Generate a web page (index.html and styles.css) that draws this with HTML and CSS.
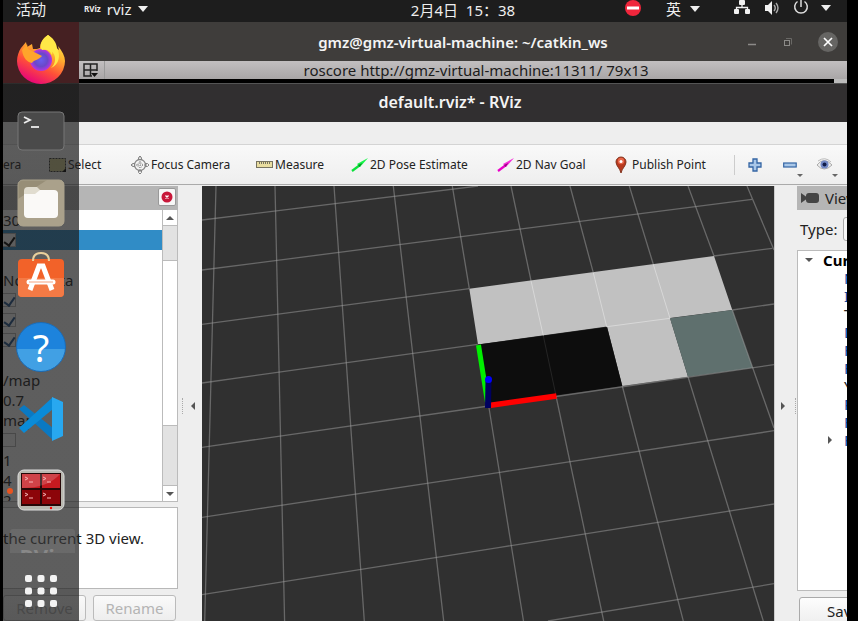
FILE: index.html
```html
<!DOCTYPE html>
<html lang="zh-CN">
<head>
<meta charset="utf-8">
<title>default.rviz* - RViz</title>
<link rel="stylesheet" href="styles.css">
</head>
<body>
<div class="desktop">
  <header class="topbar">
    <button class="bar-btn activities">活动</button>
    <button class="bar-btn app-menu"><span class="app-logo">RViz</span>rviz <i class="caret"></i></button>
    <time class="clock">2月4日&nbsp; 15：38</time>
    <div class="status">
      <svg class="dnd" width="16" height="16" viewBox="0 0 16 16"><circle cx="8" cy="8" r="8" fill="#f0263c"/><rect x="2" y="6.500" width="12" height="3" fill="#fff"/></svg>
      <button class="bar-btn lang">英 <i class="caret"></i></button>
      <svg class="net" width="16" height="16" viewBox="0 0 16 16" fill="#f2f2f2"><rect x="5" y="0" width="6" height="5" rx="1"/><rect x="0" y="9" width="5" height="5" rx="1"/><rect x="11" y="9" width="5" height="5" rx="1"/><path d="M2.500 10V7.500h11V10M8 5v3" fill="none" stroke="#f2f2f2" stroke-width="1.300"/></svg>
      <svg class="vol" width="17" height="16" viewBox="0 0 17 16" fill="#f2f2f2"><path d="M1 5h3l4-4v14l-4-4H1z"/><path d="M10 5q2.500 3 0 6M12 3q4 5 0 10" fill="none" stroke="#aaa" stroke-width="1.400"/></svg>
      <svg class="power" width="16" height="16" viewBox="0 0 16 16" fill="none" stroke="#ddd" stroke-width="1.500"><path d="M4.500 1.500a6.300 6.300 0 1 0 7 0M8 0v7"/></svg>
      <i class="caret"></i>
    </div>
  </header>

  <section class="terminal">
    <div class="term-title">
      <h2>gmz@gmz-virtual-machine: ~/catkin_ws</h2>
      <div class="win-controls">
        <button aria-label="Minimize"><svg width="10" height="10"><path d="M1 7.500h8" stroke="#8c8b88" stroke-width="1.500"/></svg></button>
        <button aria-label="Restore"><svg width="10" height="10" fill="none" stroke="#8c8b88"><rect x="1.500" y="3.500" width="5" height="5"/><path d="M3 1.500h5.500v6" stroke="#6a6966"/></svg></button>
        <button class="close" aria-label="Close"><svg width="20" height="20"><path d="m6 6 8 8m0-8-8 8" stroke="#fff" stroke-width="1.700"/></svg></button>
      </div>
    </div>
    <div class="term-tab">
      <button class="split" aria-label="Split"><svg width="16" height="15" fill="none" stroke="#222" stroke-width="1.500"><path d="M9 13H1V1h13v7M7.500 1v12M1 7h13"/><path d="M8 10h7l-3.500 4z" fill="#111" stroke="none"/></svg></button>
      <span>roscore http://gmz-virtual-machine:11311/ 79x13</span>
    </div>
    <div class="term-body"></div>
  </section>

  <section class="rviz">
    <h1 class="rviz-title">default.rviz* - RViz</h1>
    <div class="menubar"></div>
    <div class="toolbar">
      <button>era</button>
      <button><svg width="17" height="14"><rect x=".5" y=".5" width="16" height="13" fill="#d5cf91" stroke="#333" stroke-dasharray="2 1"/><path d="M17 10v4h-4z"/></svg>Select</button>
      <button><svg width="18" height="18" fill="none" stroke="#858585"><circle cx="9" cy="9" r="5.500" stroke-width="1.300"/><circle cx="9" cy="9" r="2.500" stroke-dasharray="1 1"/><path d="M9 1v16M1 9h16" stroke-dasharray="1 1"/><path d="M7.500 4V1.500L9 0l1.500 1.500V4M7.500 14v2.500L9 18l1.500-1.500V14M4 7.500H1.500L0 9l1.500 1.500H4M14 7.500h2.500L18 9l-1.500 1.500H14"/></svg>Focus Camera</button>
      <button><svg width="17" height="7"><rect x=".5" y=".5" width="16" height="6" fill="#e9dda0" stroke="#77735f"/><path d="M3.500 1v2m2-2v2m2-2v2m2-2v2m2-2v2m2-2v2" stroke="#77735f"/></svg>Measure</button>
      <button><svg width="17" height="14"><path d="M1 13 9 7" stroke="#0be13a" stroke-width="2.200"/><path d="M17 0 6 6l3 3z" fill="#16f548"/><path d="m7 7 1.500 2 3-4z" fill="#078d24"/></svg>2D Pose Estimate</button>
      <button><svg width="17" height="14"><path d="M1 13 9 7" stroke="#e900c8" stroke-width="2.200"/><path d="M17 0 6 6l3 3z" fill="#f52ad8"/><path d="m7 7 1.500 2 3-4z" fill="#970080"/></svg>2D Nav Goal</button>
      <button class="pin"><svg width="12" height="17"><path d="M6 17C5 12 1 10 1 6a5 5 0 0 1 10 0c0 4-4 6-5 11z" fill="#b83a20" stroke="#84351f"/><circle cx="6" cy="5" r="3.200" fill="#e8674a"/><circle cx="6" cy="5.500" r="1.500" fill="#fff"/></svg>Publish Point</button>
      <button class="tool plus" aria-label="Add"><svg width="14" height="14"><path d="M5 1h4v4h4v4H9v4H5V9H1V5h4z" fill="#a9c7e8" stroke="#3465a4" stroke-width="1.300"/></svg></button>
      <button class="tool" aria-label="Remove tool"><svg width="20" height="24"><rect x=".7" y="10" width="12.500" height="4" fill="#a9c7e8" stroke="#3465a4" stroke-width="1.200"/><path d="M14 21h6l-3 3z" fill="#666"/></svg></button>
      <button class="tool" aria-label="Visibility"><svg width="22" height="24"><path d="M1 12q7-9 15 0-8 8-15 0z" fill="#eee" stroke="#aaa"/><path d="M2 8q7-5 13 1" fill="none" stroke="#bbb"/><circle cx="8.500" cy="11.500" r="4" fill="#7289c6"/><circle cx="8.500" cy="11.500" r="2" fill="#101c48"/><path d="M16 21h6l-3 3z" fill="#666"/></svg></button>
    </div>

    <div class="main">
      <aside class="displays">
        <div class="panel-head"><button class="panel-close" aria-label="Close panel"><svg width="12" height="12"><circle cx="6" cy="6" r="5.500" fill="#c8183a"/><path d="m4.500 4.500 3 3m0-3-3 3" stroke="#fff" stroke-width="1.300"/></svg></button></div>
        <div class="tree">
          <div class="rows">
            <div class="row">30</div>
            <div class="row selected"><input type="checkbox" checked aria-label="Map"></div>
            <div class="row"></div>
            <div class="row">No tf data</div>
            <div class="row"><input type="checkbox" checked aria-label="Transform"></div>
            <div class="row"><input type="checkbox" checked aria-label="Message"></div>
            <div class="row"><input type="checkbox" checked aria-label="Status"></div>
            <div class="row"></div>
            <div class="row">/map</div>
            <div class="row">0.7</div>
            <div class="row">map</div>
            <div class="row"><input type="checkbox" aria-label="Draw behind"></div>
            <div class="row">1</div>
            <div class="row">4</div>
            <div class="row">2</div>
          </div>
          <div class="scrollbar"><span class="step"><i class="up"></i></span><span class="track"></span><span class="thumb"></span><span class="track low"></span><span class="step"><i class="down"></i></span></div>
        </div>
        <div class="help-text">the current 3D view.</div>
        <div class="panel-buttons"><button disabled>Remove</button><button disabled>Rename</button></div>
      </aside>
      <div class="splitter left"><i class="dots"></i><i class="arrow"></i></div>
      <svg class="scene" viewBox="202 186 572 435" preserveAspectRatio="xMinYMin slice">
        <g fill="#c1c1c1"><path d="M469.300 288.700 714 256l18.300 54-62.300 8 18 58.700-65.700 9.300-15.300-59.500-129 18z"/></g>
        <path d="m478 344.500 129-17.500 15.300 59L488.700 405z" fill="#0d0d0d"/>
        <path d="m670 318.300 62.300-8.300 20.400 57.700-64.700 9z" fill="#5f706e"/>
        <g stroke="#a0a0a0" stroke-opacity=".5" stroke-width="1.300" fill="none">
          <path d="M216 186 204.700 621M275 186l9.600 435M334 186l30.300 435M393.300 186l50.400 435M452.300 186 469.300 288.700M488.700 406l34.800 215M511 186l20 94.700M556 396l47.700 225M570 186l23.300 86.700M622.300 386l61 235M629.300 186l24 78.300M688 376.700 763.300 621M688 186l26 70M732.300 310 774 428M747 186l27 64"/>
          <path d="M202 220 478 186M202 270l550-70.700M202 324.300l267.300-35.600M714 256l58.300-7.700M202 383l275.700-38.700M732.300 310l41.700-6M202 447.300 488.700 406M556 396.500l218-31.800M202 517.300l298-45 274-41.600M202 594.700l298-47.400L774 504M548 621l226-37.300"/>
        </g>
        <path d="m531 280.700 12.300 55M593.300 272.700l13.400 54 63.300-8.400-16.700-54" fill="none" stroke="#d8d8d8"/>
        <path d="m543.300 335.700 12.700 60" stroke="#252525" fill="none"/>
        <path d="m478.500 345 9 57" stroke="#0e0" stroke-width="5"/>
        <path d="m489 405.500 67.500-9.500" stroke="#f00" stroke-width="5.500"/>
        <path d="m488.500 380-.5 28" stroke="#000060" stroke-width="6"/>
        <circle cx="488.500" cy="379.500" r="3.500" fill="#00f"/>
      </svg>
      <div class="splitter right"><i class="arrow"></i><i class="dots"></i></div>
      <aside class="views">
        <div class="panel-head"><svg width="18" height="10" fill="#444"><path d="M0 0l7 5-7 5z"/><rect x="5" width="13" height="10" rx="3"/></svg>Views</div>
        <div class="type-row"><label for="type">Type:</label><select id="type"><option>Orbit</option></select></div>
        <div class="view-tree">
          <div class="view-head"><i class="down"></i><b>Current View</b></div>
          <div class="view-row">Near Clip</div>
          <div class="view-row">Invert Z</div>
          <div class="view-row plain">Target</div>
          <div class="view-row">Distance</div>
          <div class="view-row">Focal Size</div>
          <div class="view-row">Focal Fixed</div>
          <div class="view-row plain">Yaw</div>
          <div class="view-row">Pitch</div>
          <div class="view-row">Field</div>
          <div class="view-row"><i class="arrow"></i>Focal Point</div>
        </div>
        <button class="save">Save</button>
      </aside>
    </div>
  </section>

  <nav class="dock">
    <button aria-label="Firefox"><svg width="48" height="50" viewBox="0 0 48 50">
      <defs><linearGradient id="fx" x1=".8" y1="0" x2=".3" y2="1"><stop offset="0" stop-color="#fff44f"/><stop offset=".35" stop-color="#ffb02e"/><stop offset=".65" stop-color="#ff5038"/><stop offset="1" stop-color="#e5007d"/></linearGradient><radialGradient id="fp"><stop offset="0" stop-color="#6a5cf0"/><stop offset=".6" stop-color="#6a48c8"/><stop offset="1" stop-color="#b833e1"/></radialGradient></defs>
      <path d="M31 1c5 4 7 8 8 13l3 2-1-4c4 5 7 10 7 15a24 23 0 0 1-48 0c0-5 2-10 4-13l5-6 1 5 5-3 1 5c3 0 5 0 7-1 0-5 3-10 8-13z" fill="url(#fx)"/><circle cx="24" cy="26" r="11" fill="url(#fp)"/><path d="M5 16l5-6 1 5 6 3 8 4c-3 4-9 4-10 7-5-1-9-5-10-13z" fill="#ffa52b"/><path d="M31 1c-7 5-9 11-6 15 5-1 8 0 10 5 1-3-1-4-1-4 6 4 5 13 0 17 8-3 10-13 6-20-1-6-4-10-9-13z" fill="#ffe847"/>
    </svg></button>
    <button aria-label="Terminal"><svg width="48" height="40"><rect x="1" y="1" width="46" height="38" rx="4" fill="#4a4a4a" stroke="#777"/><path d="m7 6 6 3-6 3" fill="none" stroke="#eee" stroke-width="1.800"/><path d="M14 16h8" stroke="#eee" stroke-width="1.800"/></svg></button>
    <button aria-label="Files"><svg width="48" height="48"><rect x="1" y="1" width="46" height="46" rx="5" fill="#978e77" stroke="#aaa28c"/><path d="M1 40V20L30 1h12q5 0 5 5v36q0 5-5 5H6q-5 0-5-5z" fill="#aaa18b"/><path d="M7 12q0-4 4-4h9l4 4h13q4 0 4 4v20H7z" fill="#e0dccf"/><path d="M7 15h11l5-4h14q4 0 4 4v20q0 4-4 4H11q-4 0-4-4z" fill="#faf9f7"/></svg></button>
    <button aria-label="Ubuntu Software"><svg width="48" height="48"><rect x="1" y="8" width="46" height="38" rx="4" fill="#f26229"/><path d="M1 27h46v15q0 4-4 4H5q-4 0-4-4z" fill="#f47a45"/><path d="m13 39 9-24h4l9 24" fill="none" stroke="#fff" stroke-width="5"/><path d="M12 31h24" stroke="#fff" stroke-width="5" stroke-linecap="round"/><path d="M12 31h24" stroke="#f5a27e"/><path d="M16 10q0-8 8-8t8 8" fill="none" stroke="#e9cf9b" stroke-width="2"/></svg></button>
    <button class="help" aria-label="Help">?</button>
    <button aria-label="VS Code"><svg width="46" height="46"><path d="M1 13 6 9l29 23v12z" fill="#0a79c3"/><path d="M1 32 35 1v12L6 37z" fill="#0a8bd8"/><path d="m34 1 11 5v34l-11 5z" fill="#28a8f0"/></svg></button>
    <button class="running" aria-label="Terminator"><svg width="48" height="44"><rect x="1" y="1" width="46" height="40" rx="6" fill="#b8b8b0" stroke="#ddd"/><rect x="4" y="4" width="40" height="33" fill="#260707"/><path d="M5 5h18v14H5zm20 0h18v14H25z" fill="#c51a20"/><path d="M5 21h18v14H5zm20 0h18v14H25z" fill="#8c0509"/><path d="M5 5h38q-12 14-38 14z" fill="#fff" fill-opacity=".18"/><g stroke="#f4b5b5" fill="none"><path d="m8 8 3 1.500L8 11m4 2h4m10-5 3 1.500-3 1.500m4 2h4M8 24l3 1.500L8 27m4 2h4m10-5 3 1.500-3 1.500m4 2h4"/></g><circle cx="34" cy="39" r="1.200" fill="red"/></svg></button>
    <button class="ghost" aria-label="RViz"><span>RViz</span></button>
    <button class="apps" aria-label="Show applications"><svg width="32" height="32" fill="#f3f3f3"><rect width="7" height="7" rx="2"/><rect x="12.500" width="7" height="7" rx="2"/><rect x="25" width="7" height="7" rx="2"/><rect y="12.500" width="7" height="7" rx="2"/><rect x="12.500" y="12.500" width="7" height="7" rx="2"/><rect x="25" y="12.500" width="7" height="7" rx="2"/><rect y="25" width="7" height="7" rx="2"/><rect x="12.500" y="25" width="7" height="7" rx="2"/><rect x="25" y="25" width="7" height="7" rx="2"/></svg></button>
  </nav>
</div>
</body>
</html>
```
FILE: styles.css
```css
* { box-sizing: border-box; }
body {
  margin: 0;
  background: #000;
  color: #222;
  font: 15px/20px "Noto Sans", "Noto Sans CJK SC", sans-serif;
}
button { padding: 0; border: 0; background: none; color: inherit; font: inherit; }
svg { display: block; flex: none; }
i { display: inline-block; flex: none; }
h1, h2 { margin: 0; font-size: 15px; line-height: 20px; font-weight: 600; color: #f4f4f4; }

.desktop {
  position: relative;
  display: flex;
  flex-direction: column;
  height: 100vh;
  margin: 0 11px 0 3px;
  overflow: hidden;
  background: #eee;
}

/* Top bar */
.topbar {
  display: grid;
  grid-template-columns: 76px 1fr auto 1fr;
  align-items: start;
  flex: none;
  height: 22px;
  background: #1d1d1d;
  color: #eee;
}
.bar-btn { display: flex; align-items: center; height: 18px; white-space: nowrap; }
.activities { padding-left: 13px; }
.app-menu { gap: 6px; padding-left: 5px; }
.app-logo { font-size: 8px; font-weight: 700; line-height: 12px; }
.caret { border: 5px solid transparent; border-top: 6px solid #eee; border-bottom: 0; }
.clock { line-height: 20px; }
.status { display: flex; align-items: center; justify-content: flex-end; height: 16px; padding-right: 16px; }
.lang { gap: 9px; margin: 2px 34px 0 25px; }
.vol { margin: 0 12px 0 14px; }
.power { margin-right: 12px; }

/* Terminal window */
.terminal { flex: none; }
.term-title {
  position: relative;
  display: flex;
  justify-content: center;
  align-items: center;
  height: 39px;
  padding-left: 76px;
  background: #3f3d3b;
}
.win-controls { position: absolute; right: 9px; display: flex; align-items: center; gap: 26px; }
.close { margin-left: -1px; border-radius: 50%; background: #666563; }
.term-tab {
  display: flex;
  align-items: center;
  height: 18px;
  padding-left: 76px;
  background: linear-gradient(#c2bfc0, #a9a6a7);
  color: #1c1c1c;
}
.split { display: flex; align-items: center; width: 26px; height: 18px; padding-left: 4px; border-right: 1px solid #999; }
.term-tab span { flex: 1; text-align: center; }
.term-body { height: 4px; border-right: 13px solid #bbb; background: #000; }

/* RViz window */
.rviz { display: flex; flex: 1; flex-direction: column; min-height: 0; }
.rviz-title { height: 39px; padding: 8px 0 0 50px; border-top: 1px solid #555; background: #312f30; font-size: 16px; text-align: center; }
.menubar { height: 22px; background: #eee; }
.toolbar {
  display: grid;
  grid-template-columns: 46px 82px 125px 95px 146px 116px 115px 55px 33px 1fr;
  align-items: center;
  flex: none;
  height: 41px;
  border-top: 1px solid #d4d4d4;
  border-bottom: 1px solid #aaa;
  background: linear-gradient(#f9f9f9, #eee);
  font-size: 12px;
}
.toolbar button { display: flex; align-items: center; gap: 2px; white-space: nowrap; }
.toolbar .pin { gap: 5px; padding-left: 2px; }
.toolbar .plus { height: 20px; margin-left: 6px; padding-left: 13px; border-left: 1px solid #ccc; }

.main { display: grid; grid-template-columns: 175px 24px 1fr 23px 50px; flex: 1; min-height: 0; padding-top: 1px; background: #eee; }
.main > * { min-width: 0; min-height: 0; overflow: hidden; }
.scene { width: 100%; height: 100%; background: #303030; }

/* Displays panel */
.displays { display: flex; flex-direction: column; }
.panel-head { display: flex; align-items: center; flex: none; height: 24px; background: #b5b5b5; }
.panel-close { display: grid; place-items: center; width: 18px; height: 18px; margin: 0 2px 2px auto; border: 1px solid #999; border-radius: 2px; background: #f7f7f7; }
.tree { display: flex; flex: none; height: 292px; border-bottom: 1px solid #bbb; background: #fff; }
.rows { flex: 1; overflow: hidden; }
.row { height: 20px; white-space: nowrap; }
.selected { background: #308cc6; }
.row input { display: block; position: relative; width: 13px; height: 20px; margin: 0; appearance: none; }
.row input::before { content: ""; position: absolute; inset: 3px 0; border: 1px solid #b5b5b5; border-left: 0; background: #fff; }
.row input:checked::after { content: ""; position: absolute; left: 3px; top: 5px; width: 5px; height: 9px; border: solid #1b4f8c; border-width: 0 2px 2px 0; rotate: 35deg; }
.row.selected input:checked::after { border-color: #000; }
.scrollbar { display: flex; flex-direction: column; width: 16px; border: solid #bbb; border-width: 0 1px; background: #fff; }
.step { display: grid; place-items: center; height: 15px; }
.track { height: 36px; border: solid #bbb; border-width: 1px 0; background: #e2e2e2; }
.thumb { flex: 1; }
.track.low { height: 61px; }
.up { border: 4px solid transparent; border-bottom-color: #555; border-top: 0; }
.down { border: 4px solid transparent; border-top-color: #555; border-bottom: 0; }
.help-text { flex: none; height: 82px; margin-top: 5px; padding-top: 20px; border: 1px solid #b8b8b8; border-left: 0; background: #fff; white-space: nowrap; }
.panel-buttons { display: flex; flex: none; gap: 7px; padding: 6px 2px 0 0; }
.panel-buttons button { flex: 1; height: 26px; border: 1px solid #bbb; border-radius: 3px; background: linear-gradient(#fafafa, #eee); color: #b4b4b4; }

.splitter { display: flex; align-items: center; gap: 8px; padding: 5px 4px 0; }
.splitter.right { justify-content: flex-end; gap: 10px; padding: 5px 1px 0; border-left: 1px solid #ccc; }
.dots { width: 1px; height: 16px; border-left: 1px dotted #aaa; }
.arrow { border: 4px solid transparent; border-left-color: #555; border-right: 0; }
.left .arrow { border-left: 0; border-right: 4px solid #555; }

/* Views panel */
.views { display: flex; flex-direction: column; white-space: nowrap; }
.views .panel-head { gap: 6px; padding-left: 4px; }
.type-row { display: flex; align-items: center; gap: 6px; flex: none; height: 40px; padding: 0 0 2px 3px; }
.type-row select { width: 90px; height: 24px; flex: none; border: 1px solid #aaa; border-radius: 3px; background: #f8f8f8; }
.view-tree { flex: none; height: 341px; overflow: hidden; border: 1px solid #bbb; border-width: 1px 0 1px 1px; background: #fff; }
.view-head { display: flex; align-items: center; gap: 10px; height: 18px; padding-left: 7px; color: #000; }
.view-row { position: relative; height: 18px; padding-left: 46px; line-height: 18px; color: #0a48a0; }
.view-row.plain { color: #222; }
.view-row .arrow { position: absolute; left: 30px; top: 5px; }
.save { flex: none; width: 90px; height: 28px; margin: 6px 0 0 2px; padding-left: 27px; border: 1px solid #aaa; border-radius: 3px; background: linear-gradient(#fdfdfd, #eee); text-align: left; }

/* Dock lies over the windows */
.dock {
  position: absolute;
  top: 22px;
  bottom: 0;
  left: 0;
  display: flex;
  flex-direction: column;
  width: 76px;
  padding-top: 1px;
  background: linear-gradient(#452022 61px, rgba(28, 28, 28, .71) 61px);
}
.dock button { position: relative; display: grid; place-items: center; flex: none; height: 72px; }
.dock .help::before { content: ""; position: absolute; z-index: -1; width: 48px; height: 48px; border: 1px solid #1a6cb8; border-radius: 50%; background: linear-gradient(#1d83dc 55%, #41a0e4 55%); }
.dock .help { z-index: 0; color: #fff; font-size: 38px; line-height: 48px; }
.running::before { content: ""; position: absolute; left: 4px; top: 33px; width: 6px; height: 6px; border-radius: 50%; background: #e95420; }
.dock .ghost { align-items: start; height: 24px; margin: 2px 4px 0 7px; overflow: hidden; border-radius: 3px 3px 0 0; background: rgba(255, 255, 255, .08); color: #888; font-size: 22px; font-weight: 700; }
.ghost span { padding-top: 17px; }
.dock .apps { height: 76px; }
```
